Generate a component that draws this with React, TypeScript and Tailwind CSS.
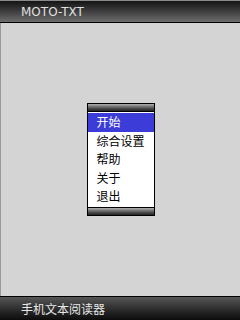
const items = ["开始", "综合设置", "帮助", "关于", "退出"];

const cjk = { fontFamily: '"Noto Sans CJK SC", "DejaVu Sans", sans-serif' };

function MenuBar() {
  return (
    <div className="h-[9px] border-y border-black bg-gradient-to-b from-[#b0b0b0] via-[#606060] to-[#202020]" />
  );
}

export default function App() {
  return (
    <div className="flex h-[320px] w-[240px] flex-col bg-[#d4d4d4]" style={cjk}>
      <div className="flex h-[22px] items-center border-t border-[#8a8a8a] bg-gradient-to-b from-[#151515] to-[#6e6e6e] pl-[21px] text-[12px] leading-none text-[#e0e0e0]" style={{ fontFamily: '"DejaVu Sans", sans-serif' }}>
        MOTO-TXT
      </div>
      <div className="h-px bg-black" />
      <div className="flex flex-1 items-center justify-center border-l border-[#9a9a9a]">
        <div className="w-[68px] border-x border-black bg-white">
          <MenuBar />
          <div className="flex flex-col py-px">
            {items.map((t, i) => (
              <div
                key={t}
                className={`h-[18.6px] pl-[9px] text-[12px] leading-[18px] ${
                  i === 0 ? "bg-[#3c3cd8] text-white" : "text-black"
                }`}
              >
                {t}
              </div>
            ))}
          </div>
          <MenuBar />
        </div>
      </div>
      <div className="h-px bg-black" />
      <div className="flex h-[23px] items-center bg-gradient-to-b from-[#575757] to-[#0c0c0c] pl-[21px] text-[12px] leading-none text-[#e8e8e8]">
        手机文本阅读器
      </div>
    </div>
  );
}
